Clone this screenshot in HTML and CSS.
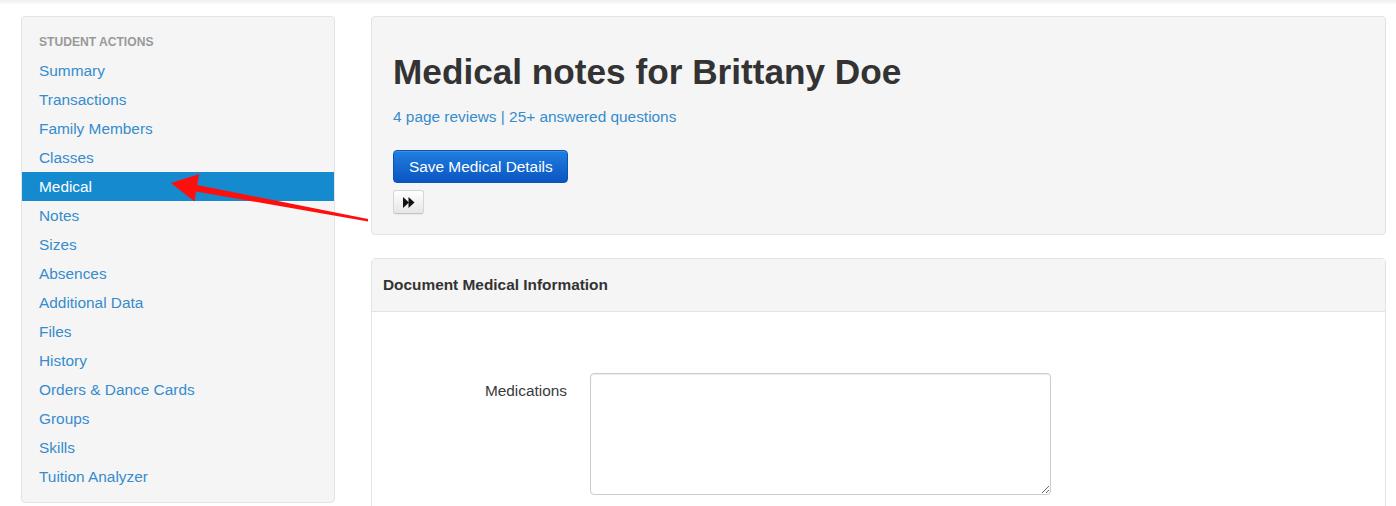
FILE: index.html
```html
<!DOCTYPE html>
<html lang="en">
<head>
<meta charset="utf-8">
<title>Medical notes for Brittany Doe</title>
<link rel="stylesheet" href="styles.css">
</head>
<body>
<div class="topbar"></div>
<div class="page">
  <aside class="sidebar">
    <div class="nav-header">STUDENT ACTIONS</div>
    <ul class="nav-list">
      <li><a href="#">Summary</a></li>
      <li><a href="#">Transactions</a></li>
      <li><a href="#">Family Members</a></li>
      <li><a href="#">Classes</a></li>
      <li class="active"><a href="#">Medical</a></li>
      <li><a href="#">Notes</a></li>
      <li><a href="#">Sizes</a></li>
      <li><a href="#">Absences</a></li>
      <li><a href="#">Additional Data</a></li>
      <li><a href="#">Files</a></li>
      <li><a href="#">History</a></li>
      <li><a href="#">Orders &amp; Dance Cards</a></li>
      <li><a href="#">Groups</a></li>
      <li><a href="#">Skills</a></li>
      <li><a href="#">Tuition Analyzer</a></li>
    </ul>
  </aside>
  <main class="content">
    <section class="hero">
      <h1 class="title">Medical notes for Brittany Doe</h1>
      <div class="meta"><a href="#">4 page reviews</a> | <a href="#">25+ answered questions</a></div>
      <button class="btn-primary">Save Medical Details</button>
      <div><button class="btn-small" aria-label="Next"><svg width="12" height="11" viewBox="0 0 12 11"><polygon points="0,0 6,5.5 0,11" fill="#111"/><polygon points="5.5,0 11.5,5.5 5.5,11" fill="#111"/></svg></button></div>
    </section>
    <section class="panel">
      <div class="panel-heading">Document Medical Information</div>
      <div class="panel-body">
        <div class="form-row">
          <label class="form-label" for="med">Medications</label>
          <textarea id="med" class="form-input"></textarea>
        </div>
      </div>
    </section>
  </main>
</div>
<svg class="annotation" width="1396" height="506" viewBox="0 0 1396 506">
  <polygon points="171,183 199.5,174 197,185 368,219 368,221.5 196,191.5 194.5,201.5" fill="#ff0e0e"/>
</svg>
</body>
</html>
```

FILE: styles.css
```css
* { box-sizing: border-box; }
html, body { margin: 0; padding: 0; background: #fff; }
body {
  font-family: "Liberation Sans", Arial, Helvetica, sans-serif;
  font-size: 15.4px;
  color: #333;
  position: relative;
  min-height: 506px;
}
a { color: #368ccd; text-decoration: none; }

.topbar {
  height: 4px;
  background: linear-gradient(#efefef, #f9f9f9);
}

.page {
  display: flex;
  align-items: flex-start;
  gap: 36px;
  padding: 12px 10px 0 21px;
}

.sidebar {
  width: 314px;
  flex: none;
  background: #f5f5f5;
  border: 1px solid #e3e3e3;
  border-radius: 4px;
  padding: 16px 0 11px;
}
.nav-header {
  font-size: 12.1px;
  font-weight: bold;
  color: #999;
  line-height: 18px;
  padding-left: 17px;
  margin-bottom: 5px;
}
.nav-list { list-style: none; margin: 0; padding: 0; }
.nav-list a {
  display: block;
  line-height: 29px;
  height: 29px;
  padding-left: 17px;
  color: #368ccd;
}
.nav-list .active a {
  background: #168acf;
  color: #fff;
}

.content {
  flex: 1;
  display: flex;
  flex-direction: column;
  gap: 23px;
}

.hero {
  background: #f5f5f5;
  border: 1px solid #e3e3e3;
  border-radius: 4px;
  padding: 35px 21px 20px;
}
.title {
  margin: 0;
  font-size: 35.2px;
  line-height: 40px;
  font-weight: bold;
  color: #333;
}
.meta {
  margin-top: 15px;
  line-height: 20px;
  color: #368ccd;
}
.btn-primary {
  margin-top: 23px;
  display: inline-block;
  font-family: inherit;
  font-size: 15.4px;
  line-height: 21px;
  color: #fff;
  padding: 5px 14px 5px 15px;
  border: 1px solid #0b52b8;
  border-radius: 4px;
  background: linear-gradient(#1f7fe0, #0b55c2);
  box-shadow: inset 0 1px 0 rgba(255,255,255,0.15);
}
.btn-small {
  margin-top: 7px;
  width: 31px;
  height: 24px;
  padding: 0;
  display: flex;
  align-items: center;
  justify-content: center;
  border: 1px solid #d6d6d6;
  border-bottom-color: #c4c4c4;
  border-radius: 3px;
  background: linear-gradient(#ffffff, #e6e6e6);
  box-shadow: 0 1px 1px rgba(0,0,0,0.05);
}

.panel {
  border: 1px solid #e3e3e3;
  border-radius: 4px 4px 0 0;
  background: #fff;
}
.panel-heading {
  background: #f5f5f5;
  border-bottom: 1px solid #e3e3e3;
  padding: 16px 11px;
  line-height: 20px;
  font-size: 15.4px;
  font-weight: bold;
  color: #333;
}
.panel-body {
  padding: 61px 0 60px;
}
.form-row {
  display: flex;
  align-items: flex-start;
  gap: 23px;
}
.form-label {
  width: 195px;
  text-align: right;
  padding-top: 8px;
  line-height: 20px;
  color: #3a3a3a;
}
.form-input {
  width: 461px;
  height: 122px;
  border: 1px solid #ccc;
  border-radius: 4px;
  box-shadow: inset 0 1px 1px rgba(0,0,0,0.075);
  font-family: inherit;
  font-size: 15.4px;
  padding: 4px 6px;
  margin: 0;
}

.annotation {
  position: absolute;
  left: 0;
  top: 0;
  pointer-events: none;
}
```
